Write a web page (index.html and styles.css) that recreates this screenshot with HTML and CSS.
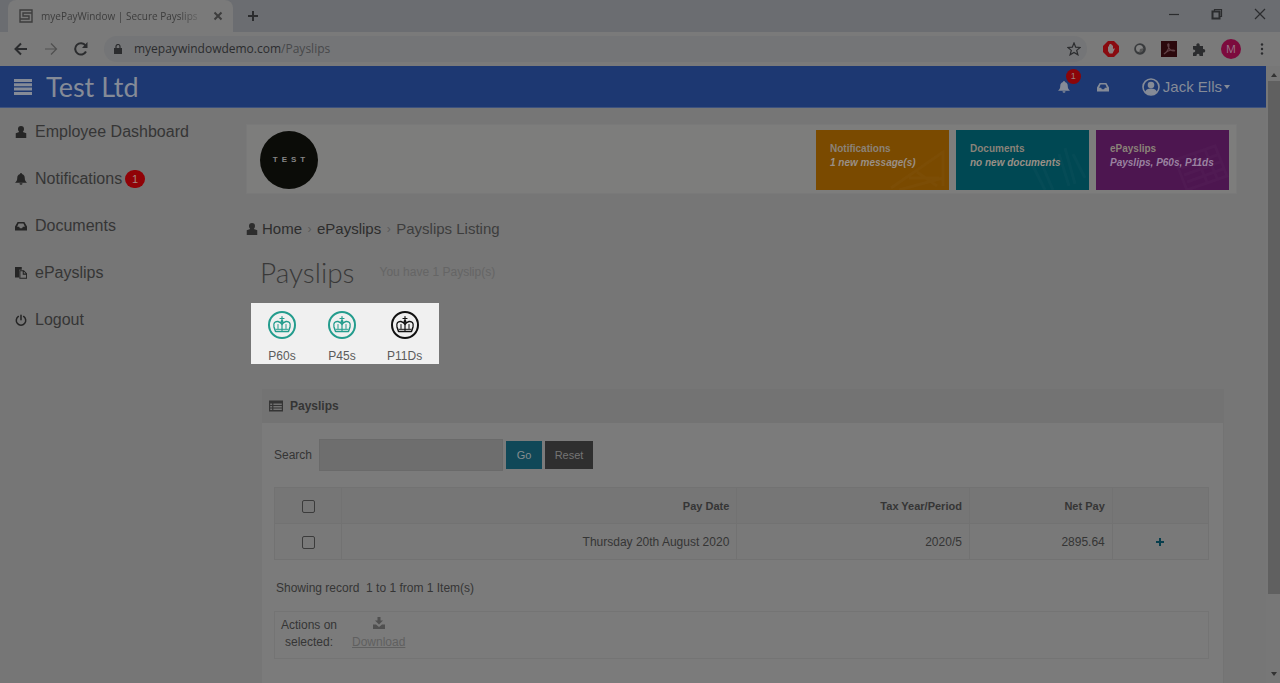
FILE: index.html
```html
<!DOCTYPE html>
<html lang="en">
<head>
<meta charset="utf-8">
<title>myePayWindow | Secure Payslips</title>
<link rel="stylesheet" href="styles.css">
</head>
<body>
<svg class="sprite" aria-hidden="true">
  <symbol id="user" viewBox="0 0 16 16"><path d="M8 0a4 4 0 0 1 4 4c0 1.500-.7 3-1.600 4L15 9.500V16H1V9.500L5.600 8C4.700 7 4 5.500 4 4a4 4 0 0 1 4-4z"/></symbol>
  <symbol id="bell" viewBox="0 0 16 16"><path d="M7 0h2v1.200c2.800.5 4 2.800 4 5.300 0 2.800 1 4.500 3 6.500H0c2-2 3-3.700 3-6.500 0-2.500 1.200-4.800 4-5.300zM6 13.800h4a2 2 0 0 1-4 0z"/></symbol>
  <symbol id="inbox" viewBox="0 0 16 16"><path fill-rule="evenodd" d="M3.500 2.500h9L16 8.500V14H0V8.500zM4.800 4.500 2.800 9h2.700l1 2h3l1-2h2.700l-2-4.500z"/></symbol>
  <symbol id="paste" viewBox="0 0 16 16"><path d="M0 0h9v3.500H5.500V14H0z"/><path fill="none" stroke="currentColor" stroke-width="1.400" d="M6.500 5h5l4 4v6h-9zM11 5v4.500h4.500"/></symbol>
  <symbol id="power" viewBox="0 0 16 16"><path fill="none" stroke="currentColor" stroke-width="2" stroke-linecap="round" d="M4.500 3.300a6.300 6.300 0 1 0 7 0M8 1.500v6"/></symbol>
  <symbol id="crown" viewBox="0 0 30 30"><g fill="none" stroke="currentColor" stroke-linejoin="round" stroke-linecap="round"><circle cx="15" cy="15" r="13" stroke-width="2"/><path stroke-width="1.400" d="M8.500 21.500 7 17C6 13.300 8 11 11 11.500c2 .4 3.300 1.500 4 3 .7-1.500 2-2.600 4-3 3-.5 5 1.800 4 5.500l-1.500 4.500z"/><path stroke-width="1.200" d="M15 6.500v14M13 8.500h4"/><path stroke-width="1" d="M11 14.500v4M19 14.500v4M9 19.300h12"/></g><circle cx="15" cy="11.500" r="1.400" fill="currentColor"/></symbol>
</svg>

<div class="browser">
  <div class="tabstrip">
    <div class="tab">
      <svg class="i14" viewBox="0 0 14 14"><path fill="none" stroke="currentColor" stroke-width="1.400" d="M1 1h12v12H1zM10 4H4v3h6v3H4M1 10h3M10 4h3"/></svg>
      <span class="tab-title">myePayWindow | Secure Payslips</span>
      <button class="plain" aria-label="Close tab"><svg class="i10" viewBox="0 0 10 10"><path class="line2" d="M1.500 1.500l7 7m0-7l-7 7"/></svg></button>
    </div>
    <button class="plain newtab" aria-label="New tab"><svg class="i12" viewBox="0 0 12 12"><path class="line2" d="M6 1v10M1 6h10"/></svg></button>
    <div class="winbtns">
      <button class="plain" aria-label="Minimise"><svg class="i12" viewBox="0 0 12 12"><path class="line1" d="M1 6.500h10"/></svg></button>
      <button class="plain" aria-label="Restore"><svg class="i12" viewBox="0 0 12 12"><path class="line2" d="M1.500 3.500h7v7h-7z"/><path class="line1" d="M3.500 3V1.500h7v7H9"/></svg></button>
      <button class="plain" aria-label="Close"><svg class="i12" viewBox="0 0 12 12"><path class="line1" d="M1 1l10 10m0-10L1 11"/></svg></button>
    </div>
  </div>
  <div class="toolbar">
    <button class="plain" aria-label="Back"><svg class="i14" viewBox="0 0 14 14"><path class="line2" d="M13 7H1.500M7 1.500 1.500 7 7 12.500"/></svg></button>
    <button class="plain faint" aria-label="Forward"><svg class="i14" viewBox="0 0 14 14"><path class="line1" d="M1 7h11.500M7 1.500 12.500 7 7 12.500"/></svg></button>
    <button class="plain" aria-label="Reload"><svg class="i14" viewBox="0 0 14 14"><path class="line2" d="M12 9.500A5.700 5.700 0 1 1 11.500 3.500"/><path d="M13.500 0v6H8z"/></svg></button>
    <div class="address">
      <svg class="i10" viewBox="0 0 10 10"><path d="M1 4h8v6H1z"/><path class="line1" d="M3 4V2.500a2 2 0 0 1 4 0V4"/></svg>
      <span>myepaywindowdemo.com<span class="path">/Payslips</span></span>
      <svg class="i14 star" viewBox="0 0 14 14"><path class="line1" d="M7 1l1.700 4.200 4.500.3-3.500 2.900 1.200 4.400L7 10.400l-3.900 2.400 1.200-4.400L.8 5.500l4.500-.3z"/></svg>
    </div>
    <div class="exts">
      <svg class="i16" viewBox="0 0 16 16"><path fill="#890b10" d="M5 0h6l5 5v6l-5 5H5l-5-5V5z"/><path fill="#8b8080" d="M5 5.500l1 0V3.500h1V3h1v.5h1v1h1V8l1.300-.8.500.6L9.500 12.500H6.500L5 10z"/></svg>
      <svg class="i12" viewBox="0 0 12 12"><circle cx="6" cy="6" r="5.800" fill="#393b3d"/><circle cx="5.500" cy="5.500" r="3.500" fill="#818181"/><path fill="#555" d="M6 6l4-1-2 4-3 1z"/></svg>
      <svg class="i16" viewBox="0 0 16 16"><path fill="#2b080c" d="M0 0h16v16H0z"/><path fill="none" stroke="#604045" stroke-width="1.200" d="M3 13c3-2 5-6 5-9 0-2-2-1-1 1 1 3 3 5 6 5 1 0 1-1-1-1-3 0-6 1-9 4z"/></svg>
      <svg class="i14" viewBox="0 0 14 14"><path d="M1 4h3.500C3.500 1 8 0 7.800 4H11v3c3-.5 3 4 0 3.500V14H7.500c.3-3-3.200-3-3 0H1v-3.500c3 0 3-3.200 0-3z"/></svg>
      <span class="avatar">M</span>
      <svg class="i12" viewBox="0 0 12 12"><circle cx="6" cy="1.500" r="1.200"/><circle cx="6" cy="6" r="1.200"/><circle cx="6" cy="10.500" r="1.200"/></svg>
    </div>
  </div>
</div>

<div class="viewport">
  <div class="page">
    <header class="topbar">
      <button class="plain" aria-label="Menu"><svg class="i18" viewBox="0 0 18 18"><path d="M0 1h18v3H0zM0 5.300h18v3H0zM0 9.600h18v3H0zM0 14h18v3H0z"/></svg></button>
      <span class="brand">Test Ltd</span>
      <nav class="quick">
        <a href="#" class="alert" aria-label="Notifications"><svg class="i12"><use href="#bell"/></svg><span class="count">1</span></a>
        <a href="#" aria-label="Documents"><svg class="i12"><use href="#inbox"/></svg></a>
        <button class="plain account"><svg class="i18" viewBox="0 0 18 18"><circle cx="9" cy="9" r="8" fill="none" stroke="currentColor" stroke-width="1.600"/><circle cx="9" cy="7" r="3.300"/><path d="M3 14c1-3 3-3.500 6-3.500s5 .5 6 3.500c-3 3.500-9 3.500-12 0z"/></svg>Jack Ells<svg class="caret" viewBox="0 0 6 4"><path d="M0 0h6L3 4z"/></svg></button>
      </nav>
    </header>
    <div class="columns">
      <nav class="sidebar">
        <a href="#"><svg class="i12"><use href="#user"/></svg>Employee Dashboard</a>
        <a href="#"><svg class="i12"><use href="#bell"/></svg>Notifications<span class="pill">1</span></a>
        <a href="#"><svg class="i12"><use href="#inbox"/></svg>Documents</a>
        <a href="#"><svg class="i12"><use href="#paste"/></svg>ePayslips</a>
        <a href="#"><svg class="i12"><use href="#power"/></svg>Logout</a>
      </nav>
      <main>
        <section class="hero">
          <div class="logo">TEST</div>
          <div class="tiles">
            <a href="#" class="tile orange"><svg class="mark" viewBox="0 0 60 50"><path d="M2 48 54 12v34M10 50l44-12M20 38h30M28 32l20 14"/></svg><b>Notifications</b><i>1 new message(s)</i></a>
            <a href="#" class="tile teal"><svg class="mark" viewBox="0 0 60 50"><path d="M4 26l12 24M12 22l12 28M30 14l10 32M36 8l10 36M44 14l12 24"/></svg><b>Documents</b><i>no new documents</i></a>
            <a href="#" class="tile purple"><svg class="mark" viewBox="0 0 60 50"><path d="M6 20l40-14 12 30-40 14zM12 28l36-13M15 35l36-13M18 42l36-13M26 14l12 28M36 10l12 28"/></svg><b>ePayslips</b><i>Payslips, P60s, P11ds</i></a>
          </div>
        </section>
        <nav class="crumbs">
          <svg class="i12"><use href="#user"/></svg><a href="#">Home</a><span class="sep">›</span><a href="#">ePayslips</a><span class="sep">›</span><span class="here">Payslips Listing</span>
        </nav>
        <div class="title"><h1>Payslips</h1><small>You have 1 Payslip(s)</small></div>
        <div class="forms">
          <a href="#"><svg class="i30"><use href="#crown"/></svg>P60s</a>
          <a href="#"><svg class="i30"><use href="#crown"/></svg>P45s</a>
          <a href="#" class="dark"><svg class="i30"><use href="#crown"/></svg>P11Ds</a>
        </div>
        <section class="panel">
          <h2><svg class="i14" viewBox="0 0 14 14"><path fill-rule="evenodd" d="M0 1.500h14v11H0zM1.200 4.500V6h2V4.500zm3.200 0V6h8.400V4.500zM1.200 7v1.500h2V7zm3.200 0v1.500h8.400V7zM1.200 9.500V11h2V9.500zm3.200 0V11h8.400V9.500z"/></svg>Payslips</h2>
          <div class="body">
            <form class="search">
              <label for="q">Search</label><input type="text" id="q">
              <button type="button" class="go">Go</button><button type="reset" class="reset">Reset</button>
            </form>
            <table>
              <colgroup><col class="c1"><col class="c2"><col class="c3"><col class="c4"><col class="c5"></colgroup>
              <thead><tr><th><input type="checkbox" aria-label="Select all"></th><th>Pay Date</th><th>Tax Year/Period</th><th>Net Pay</th><th></th></tr></thead>
              <tbody><tr><td><input type="checkbox" aria-label="Select payslip"></td><td>Thursday 20th August 2020</td><td>2020/5</td><td>2895.64</td><td><button class="plain plus" aria-label="Expand"><svg class="i10" viewBox="0 0 10 10"><path class="line2" d="M5 1v8M1 5h8"/></svg></button></td></tr></tbody>
            </table>
            <p class="showing">Showing record&nbsp; 1 to 1 from 1 Item(s)</p>
            <div class="actions">
              <span class="label">Actions on selected:</span>
              <a href="#"><svg class="i12" viewBox="0 0 12 12"><path d="M4.500 0h3v3.500H10L6 7.500 2 3.500h2.500zM0 7.500h3l3 2.500 3-2.500h3V12H0z"/></svg>Download</a>
            </div>
          </div>
        </section>
      </main>
    </div>
  </div>
  <div class="scrollbar"><svg class="arrow" viewBox="0 0 6 4"><path d="M0 4h6L3 0z"/></svg><div class="thumb"></div><svg class="arrow" viewBox="0 0 6 4"><path d="M0 0h6L3 4z"/></svg></div>
</div>
</body>
</html>
```
FILE: styles.css
```css
* { box-sizing: border-box; }
body { margin: 0; height: 100vh; display: flex; flex-direction: column; overflow: hidden; background: #767676; color: #353535; font: 12px/16px "Liberation Sans", Arial, sans-serif; }
a { color: inherit; text-decoration: none; }
svg { fill: currentColor; flex: none; display: block; }
.sprite { position: absolute; width: 0; height: 0; }
.plain { border: 0; padding: 0; background: none; color: inherit; font: inherit; display: flex; align-items: center; }
.line1, .line2 { fill: none; stroke: currentColor; stroke-width: 1.2; }
.line2 { stroke-width: 2; }
.i10 { width: 10px; height: 10px; }
.i12 { width: 12px; height: 12px; }
.i14 { width: 14px; height: 14px; }
.i16 { width: 16px; height: 16px; }
.i18 { width: 18px; height: 18px; }
.i30 { width: 30px; height: 30px; }

.browser { color: #2b2c2e; font-family: "Open Sans", sans-serif; }
.tabstrip { height: 32px; display: flex; align-items: center; background: #6b6d71; }
.tab { width: 225px; height: 32px; margin-left: 8px; padding: 0 10px 0 11px; display: flex; align-items: center; gap: 8px; background: #7a7a7a; border-radius: 8px 8px 0 0; font-size: 10px; color: #3d3d3d; }
.tab-title { flex: 1; white-space: nowrap; mask-image: linear-gradient(90deg, #000 85%, transparent); }
.newtab { margin-left: 14px; }
.winbtns { margin-left: auto; margin-right: 14px; display: flex; gap: 31px; padding-bottom: 4px; }
.toolbar { height: 34px; padding: 0 12px 0 14px; display: flex; align-items: center; gap: 16px; background: #7a7a7a; }
.faint { color: #505050; }
.address { flex: 1; height: 26px; padding: 0 6px 0 9px; display: flex; align-items: center; gap: 11px; border-radius: 13px; background: #747577; font-size: 12px; }
.path { color: #47484a; }
.star { margin-left: auto; }
.exts { display: flex; align-items: center; gap: 15px; }
.avatar { width: 20px; height: 20px; border-radius: 50%; background: #7c0b3d; color: #99778a; text-align: center; font-size: 11px; line-height: 20px; }

.viewport { flex: 1; display: flex; min-height: 0; }
.page { flex: 1; min-width: 0; display: flex; flex-direction: column; }
.topbar { height: 42px; flex: none; padding: 0 36px 0 14px; display: flex; align-items: center; gap: 14px; background: #1d3872; color: #858b97; border-bottom: 1px solid #3d527f; }
.brand { font: 27px/40px Lato, sans-serif; }
.quick { margin-left: auto; display: flex; align-items: center; gap: 33px; }
.alert { position: relative; margin-right: -6px; }
.count { position: absolute; left: 8px; top: -12px; width: 15px; height: 15px; border-radius: 50%; background: #8b0508; color: #99807b; font-size: 9px; line-height: 15px; text-align: center; }
.account { gap: 3px; font-size: 15px; }
.account svg:last-child { margin-left: -1px; }
.caret { width: 6px; height: 4px; }

.columns { flex: 1; min-height: 0; display: flex; }
.sidebar { width: 246px; flex: none; padding: 0 15px; font-size: 16px; }
.sidebar a { height: 47px; display: flex; align-items: center; gap: 8px; }
.sidebar svg { color: #252525; }
.pill { margin-left: -5px; width: 20px; height: 18px; border-radius: 9px; background: #900207; color: #a58580; font-size: 11px; line-height: 18px; text-align: center; }

main { flex: 1; min-width: 0; padding: 16px 29px 0 0; display: flex; flex-direction: column; }
.hero { height: 70px; flex: none; padding: 6px 7px 5px 13px; display: flex; align-items: center; justify-content: space-between; background: #7d7d7c; border: 1px solid #797979; }
.logo { width: 58px; height: 58px; border-radius: 50%; background: #0b0c08; color: #858585; font: bold 8px/58px "Liberation Sans", sans-serif; letter-spacing: 4px; padding-left: 4px; text-align: center; }
.tiles { display: flex; gap: 7px; }
.tile { position: relative; width: 133px; height: 60px; padding: 12px 14px; font-size: 10px; line-height: 14px; color: #998f86; display: flex; flex-direction: column; white-space: nowrap; }
.tile i { font-weight: bold; }
.tile b { color: #8a8278; }
.mark { position: absolute; right: 0; bottom: 0; width: 60px; height: 50px; fill: none; stroke: #fff; stroke-opacity: .02; stroke-width: 3; }
.orange { background: #7a4a00; }
.teal { background: #004853; }
.purple { background: #4d1650; color: #9a83a0; }
.crumbs { height: 24px; margin-top: 23px; display: flex; align-items: center; font-size: 15px; color: #2d2d2d; }
.crumbs svg { margin-right: 4px; }
.sep { width: 15px; text-align: center; color: #5a5a5a; font-size: 12px; }
.here { color: #3d3d3d; }
.title { height: 40px; margin: 11px 0 10px 14px; display: flex; align-items: center; gap: 25px; }
h1 { margin: 0; font: 300 28px/40px Lato, sans-serif; color: #393939; }
small { font-size: 12px; color: #656565; }
.forms { align-self: flex-start; margin: 1px 0 0 5px; height: 61px; padding: 7px 17px 0 16px; display: flex; gap: 30px; background: #f0f0f0; color: #5b5b5b; }
.forms a { display: flex; flex-direction: column; align-items: center; gap: 8px; }
.forms svg { color: #239c8d; }
.forms .dark svg { color: #111; }

.panel { flex: 1; min-height: 0; margin: 25px 13px 0 16px; display: flex; flex-direction: column; }
h2 { flex: none; height: 34px; margin: 0; padding-left: 7px; display: flex; align-items: center; gap: 7px; background: #737373; font-size: 12px; }
.body { flex: 1; min-height: 0; padding: 16px 14px 0 12px; background: #7b7b7b; border-right: 1px solid #737373; overflow: hidden; }
.search { display: flex; align-items: center; height: 32px; }
.search label { margin-right: 7px; }
.search input { width: 184px; height: 32px; margin-right: 3px; border: 1px solid #6a6a6a; background: #6e6e6e; }
.search button { height: 28px; border: 0; padding: 0; color: #858d8f; font: 11px "Liberation Sans", sans-serif; }
.search .go { background: #104858; width: 36px; margin-right: 3px; }
.search .reset { background: #2f2f2f; color: #757575; width: 48px; }
table { width: 100%; margin-top: 16px; table-layout: fixed; border-collapse: collapse; background: #797979; }
.c1 { width: 7.2%; } .c2 { width: 42.3%; } .c3 { width: 24.9%; } .c4 { width: 15.3%; } .c5 { width: 10.3%; }
th, td { height: 36px; padding: 0 7px; border: 1px solid #727272; text-align: right; }
th { font-size: 11px; }
th:first-child, td:first-child { text-align: center; }
thead { background: #767676; }
table input { appearance: none; width: 13px; height: 13px; margin: 0; border: 1px solid #3b3b3b; border-radius: 2px; vertical-align: middle; }
.plus { margin: 0 auto; color: #083e4d; }
.showing { margin: 20px 2px 15px; }
.actions { height: 48px; padding: 5px; display: flex; gap: 14px; border: 1px solid #747474; line-height: 17px; }
.label { width: 58px; text-align: center; }
.actions a { display: flex; flex-direction: column; align-items: center; gap: 5px; color: #606060; text-decoration: underline; }
.actions svg { color: #505050; }

.scrollbar { width: 14px; padding: 7px 0 7px 2px; display: flex; flex-direction: column; align-items: center; background: #777; }
.thumb { width: 12px; flex: 0 1 85%; margin: 4px 0 auto; background: #606060; }
.arrow { width: 6px; height: 4px; color: #333; }
```
